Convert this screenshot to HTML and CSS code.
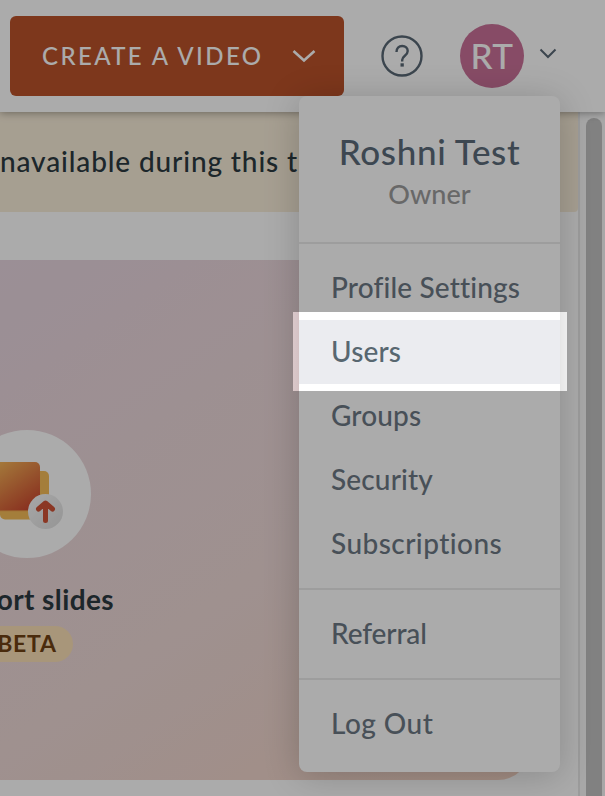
FILE: index.html
```html
<!DOCTYPE html>
<html lang="en">
<head>
<meta charset="utf-8">
<title>Dashboard</title>
<link rel="stylesheet" href="styles.css">
</head>
<body>
<div class="app">
  <header class="topbar">
    <button class="create"><span class="create-label">CREATE A VIDEO</span>
      <svg class="create-caret" width="24" height="14" viewBox="0 0 24 14"><path d="M1.500 2 12 11.500 22.500 2"/></svg>
    </button>
    <svg class="help" width="42" height="42" viewBox="0 0 42 42"><circle cx="21" cy="21" r="19.500"/><path d="M15.500 17c0-4 2.300-6 5.700-6 3.300 0 5.500 2 5.500 5 0 4.800-5.500 4.600-5.500 9v1.500"/><rect x="19.500" y="28.300" width="3.300" height="3.300"/></svg>
    <div class="avatar"><span>RT</span></div>
    <svg class="user-caret" width="18" height="11" viewBox="0 0 18 11"><path d="M1.500 1.500 9 9l7.500-7.500"/></svg>
  </header>
  <div class="body">
    <main class="content">
      <div class="banner"><span class="banner-text">navailable during this t</span></div>
      <section class="card">
        <div class="tile">
          <div class="tile-icon">
            <svg width="128" height="128" viewBox="0 0 128 128">
              <defs>
                <linearGradient id="sheet" x1="0" y1="0" x2=".75" y2="1"><stop offset="0" stop-color="#fac15c"/><stop offset="1" stop-color="#cc4930"/></linearGradient>
                <linearGradient id="disc" x1="0" y1="0" x2="1" y2="1"><stop offset="0" stop-color="#fafafa"/><stop offset="1" stop-color="#dedede"/></linearGradient>
              </defs>
              <rect x="37" y="41" width="49" height="48.500" rx="5" fill="#f5bd59"/>
              <rect x="25" y="32" width="52" height="49" rx="5" fill="url(#sheet)"/>
              <path d="M37 80.700h40" stroke="#e59146" stroke-width="1"/>
              <circle cx="82.500" cy="81.500" r="17.500" fill="url(#disc)"/>
              <path class="arrow" d="M82.500 90.500V74M75.500 79l7-6 7 6"/>
            </svg>
          </div>
          <div class="tile-title"><span>ort slides</span></div>
          <div class="beta"><span>BETA</span></div>
        </div>
      </section>
    </main>
    <div class="track"><div class="thumb"></div></div>
  </div>
  <nav class="menu">
    <div class="profile"><div class="name"><span>Roshni Test</span></div><div class="role"><span>Owner</span></div></div>
    <div class="group">
      <a class="item"><span>Profile Settings</span></a>
      <a class="item active"><span>Users</span></a>
      <a class="item"><span>Groups</span></a>
      <a class="item"><span>Security</span></a>
      <a class="item wide"><span>Subscriptions</span></a>
    </div>
    <div class="group"><a class="item narrow"><span>Referral</span></a></div>
    <div class="group"><a class="item wide"><span>Log Out</span></a></div>
  </nav>
  <div class="spotlight"></div>
</div>
</body>
</html>
```
FILE: styles.css
```css
* { box-sizing: border-box; }
body { margin: 0; font-family: Lato, "Liberation Sans", sans-serif; font-variant-ligatures: none; }
svg { display: block; flex: none; fill: none; }
span { white-space: nowrap; }
.app { position: relative; width: 605px; height: 796px; overflow: hidden; background: #fff; }

.topbar { position: relative; z-index: 1; display: flex; align-items: center; height: 112px; padding-left: 10px; background: #fff; box-shadow: 0 1px 8px rgba(0,0,0,.36); }
.create { display: flex; align-items: center; justify-content: space-between; width: 334px; height: 80px; padding: 0 28px 2px 32px; border: 0; border-radius: 6px; background: #bb522a; color: #fff; font: 500 24px Lato, sans-serif; letter-spacing: 2.4px; }
.create-caret { margin-top: 2px; }
.create-caret path { stroke: #fff; stroke-width: 2.6; }
.help { margin-left: 37px; stroke: #596875; stroke-width: 2.4; }
.help rect { fill: #596875; stroke: none; }
.avatar { display: flex; align-items: center; justify-content: center; width: 64px; height: 64px; margin-left: 37px; padding-bottom: 2px; border-radius: 50%; background: #c97198; color: #fff; font-size: 35px; font-weight: 500; letter-spacing: .5px; }
.user-caret { margin: -6px 0 0 15px; stroke: #596875; stroke-width: 2; }

.body { display: flex; height: 684px; }
.content { width: 578px; flex: none; }
.banner { display: flex; align-items: center; height: 100px; padding-bottom: 2px; background: #f8edd9; border-radius: 0 0 4px 0; color: #2c3a40; font-size: 28px; font-weight: 500; letter-spacing: .87px; }
.card { width: 530px; height: 520px; margin-top: 48px; border-radius: 0 0 32px 0; background: linear-gradient(145deg, #e7d5e0 0%, #ebd7da 30%, #edd8d6 55%, #f3d3c3 100%); }
.tile { display: flex; flex-direction: column; align-items: center; width: 174px; margin-left: -60px; padding-top: 170px; }
.tile-icon { width: 128px; height: 128px; border-radius: 50%; background: #fff; }
.arrow { stroke: #cf5336; stroke-width: 5; stroke-linecap: round; stroke-linejoin: round; }
.tile-title { align-self: flex-end; margin-top: 23px; height: 36px; line-height: 36px; font-size: 28px; font-weight: 700; letter-spacing: .4px; color: #2c3a40; }
.beta { margin-top: 9px; width: 92px; height: 36px; border-radius: 18px; background: #fbe0b6; color: #6f4012; font-size: 23px; font-weight: 700; line-height: 35px; letter-spacing: .8px; text-align: center; }
.track { width: 27px; padding: 6px 0 0 6px; border-left: 2px solid #e8e8e8; background: #fafafa; }
.thumb { width: 16px; height: 700px; border-radius: 8px; background: #c1c1c1; }

.menu { position: absolute; z-index: 2; left: 299px; top: 96px; width: 261px; height: 676px; border-radius: 8px; background: #fff; box-shadow: 0 4px 36px rgba(0,0,0,.2); }
.profile { height: 146px; padding-top: 33px; text-align: center; }
.name { height: 44px; line-height: 44px; font-size: 35px; font-weight: 500; letter-spacing: .65px; color: #5b6b7a; }
.role { height: 40px; line-height: 42px; font-size: 27px; font-weight: 500; color: #9b9b9b; }
.group { padding: 12px 0; border-top: 2px solid #eaeaea; }
.item { display: flex; align-items: center; height: 64px; padding: 0 0 2px 32px; color: #6c7884; font-size: 28px; font-weight: 500; letter-spacing: .15px; }
.item.wide { letter-spacing: .45px; }
.item.narrow { letter-spacing: -.1px; }
.item.active { background: #ebecf0; color: #586770; }

.spotlight { position: absolute; z-index: 3; left: 293px; top: 312px; width: 274px; height: 79px; box-shadow: 0 0 0 900px rgba(0,0,0,.33); }
```
